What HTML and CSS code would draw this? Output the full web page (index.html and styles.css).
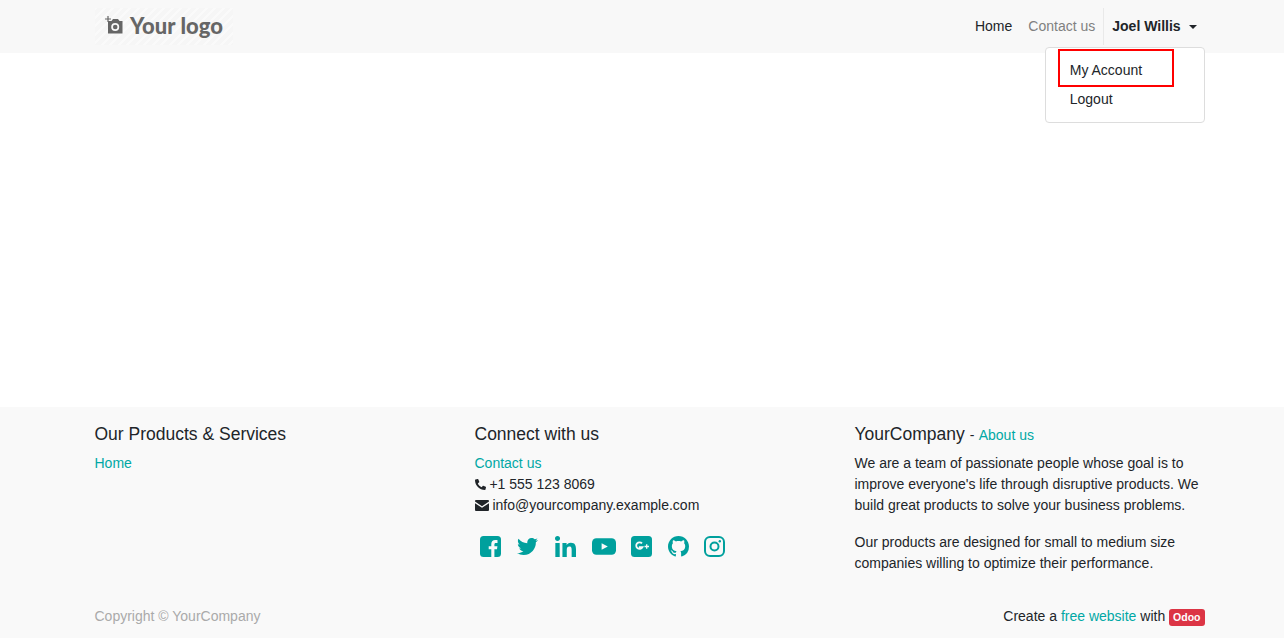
FILE: index.html
```html
<!DOCTYPE html>
<html lang="en">
<head>
    <meta charset="UTF-8">
    <meta name="viewport" content="width=device-width, initial-scale=1.0">
    <title>Your Company</title>
    <link rel="stylesheet" href="styles.css">
</head>
<body>
    <div class="nav-bar">
        <div class="container nav-inner">
            <a class="logo" href="#">
                <svg class="logo-icon" viewBox="0 0 18 18" width="18" height="18">
                    <path fill="#666" d="M3 5h3.500l1.500-2h5l1.500 2h3v12.500H3z"/>
                    <circle cx="10.200" cy="11" r="4" fill="#f8f8f8"/>
                    <circle cx="10.200" cy="11" r="2.300" fill="#666"/>
                    <path stroke="#666" stroke-width="1.200" d="M3 0v6M0 3h6"/>
                </svg>
                <span>Your logo</span>
            </a>
            <div class="nav-links">
                <a href="#">Home</a>
                <a href="#" class="muted">Contact us</a>
                <a href="#" class="user">Joel Willis <span class="caret"></span></a>
            </div>
        </div>
    </div>

    <div class="dropdown">
        <a href="#">My Account</a>
        <a href="#">Logout</a>
    </div>
    <div class="highlight"></div>

    <div class="page-body"></div>

    <div class="footer">
        <div class="container footer-cols">
            <div class="col">
                <h5>Our Products &amp; Services</h5>
                <a href="#">Home</a>
            </div>
            <div class="col">
                <h5>Connect with us</h5>
                <div><a href="#">Contact us</a></div>
                <div class="contact-row">
                    <svg class="phone" viewBox="0 0 512 512" width="11" height="11"><path fill="#212529" d="M19 24 123 0c11-3 23 3 28 14l48 112c4 10 1 21-7 28l-60 50c36 77 99 140 176 176l50-60c7-8 18-11 28-7l112 48c11 5 17 17 14 28l-24 104c-3 11-12 19-24 19C208 512 0 304 0 48c0-12 8-21 19-24z"/></svg>
                    +1 555 123 8069
                </div>
                <div class="contact-row">
                    <svg class="mail" viewBox="0 0 14 11" width="14" height="11"><path fill="#212529" d="M1 0h12a1 1 0 0 1 1 1v.6L7 6.200 0 1.600V1a1 1 0 0 1 1-1zM0 3.200l7 4.600 7-4.600V10a1 1 0 0 1-1 1H1a1 1 0 0 1-1-1z"/></svg>
                    info@yourcompany.example.com
                </div>
                <div class="social">
                    <a href="#"><svg viewBox="0 0 21 21" width="21" height="21"><rect width="21" height="21" rx="3.500" fill="#00a09d"/><path fill="#f9f9f9" d="M14.400 21v-7.800h2.600l.4-3h-3V8.400c0-.9.3-1.500 1.500-1.500h1.600V4.200c-.3 0-1.200-.1-2.300-.1-2.300 0-3.900 1.400-3.900 4v2.100H8.700v3h2.600V21z"/></svg></a>
                    <a href="#"><svg viewBox="0 0 512 512" width="21" height="21"><path fill="#00a09d" d="M459.37 151.716c.325 4.548.325 9.097.325 13.645 0 138.72-105.583 298.558-298.558 298.558-59.452 0-114.68-17.219-161.137-47.106 8.447.974 16.568 1.299 25.34 1.299 49.055 0 94.213-16.568 130.274-44.832-46.132-.975-84.792-31.188-98.112-72.772 6.498.974 12.995 1.624 19.818 1.624 9.421 0 18.843-1.3 27.614-3.573-48.081-9.747-84.143-51.98-84.143-102.985v-1.299c13.969 7.797 30.214 12.67 47.431 13.319-28.264-18.843-46.781-51.005-46.781-87.391 0-19.492 5.197-37.36 14.294-52.954 51.655 63.675 129.3 105.258 216.365 109.807-1.624-7.797-2.599-15.918-2.599-24.04 0-57.828 46.782-104.934 104.934-104.934 30.213 0 57.502 12.67 76.67 33.137 23.715-4.548 46.456-13.645 66.599-25.665-7.798 24.366-24.366 44.833-46.132 57.827 21.117-2.273 41.584-8.122 60.426-16.243-14.292 20.791-32.161 39.308-52.628 54.253z"/></svg></a>
                    <a href="#"><svg viewBox="0 0 448 448" width="21" height="21"><path fill="#00a09d" d="M100.280 448H7.400V148.900h92.880zM53.790 108.100C24.090 108.100 0 83.500 0 53.800a53.790 53.790 0 0 1 107.580 0c0 29.700-24.100 54.300-53.790 54.300zM447.900 448h-92.680V302.400c0-34.700-.7-79.200-48.290-79.200-48.290 0-55.690 37.700-55.690 76.700V448h-92.780V148.900h89.080v40.800h1.300c12.400-23.500 42.690-48.300 87.880-48.300 94 0 111.280 61.900 111.280 142.300V448z"/></svg></a>
                    <a href="#" class="shift-right"><svg viewBox="0 0 25 17" width="24" height="17"><rect width="25" height="17" rx="4.500" fill="#00a09d"/><path fill="#f9f9f9" d="M10 5l6.500 3.500L10 12z"/></svg></a>
                    <a href="#"><svg viewBox="0 0 21 21" width="21" height="21"><rect width="21" height="21" rx="3.500" fill="#00a09d"/><path fill="none" stroke="#f9f9f9" stroke-width="1.800" d="M11 7.400A3.300 3.300 0 1 0 11.400 11.200H7.900"/><path stroke="#f9f9f9" stroke-width="1.300" d="M13.500 10.500h4.500M15.700 8.300v4.400"/></svg></a>
                    <a href="#"><svg viewBox="0 0 16 16" width="21" height="21"><path fill="#00a09d" d="M8 0C3.580 0 0 3.580 0 8c0 3.540 2.290 6.530 5.470 7.590.4.070.55-.17.55-.38 0-.19-.01-.82-.01-1.490-2.010.37-2.530-.49-2.690-.94-.09-.23-.48-.94-.82-1.130-.28-.15-.68-.52-.01-.53.63-.01 1.080.58 1.230.82.72 1.210 1.870.87 2.330.66.07-.52.28-.87.51-1.070-1.780-.2-3.640-.89-3.640-3.950 0-.87.31-1.590.82-2.150-.08-.2-.36-1.020.08-2.120 0 0 .67-.21 2.200.82.64-.18 1.320-.27 2-.27.68 0 1.360.09 2 .27 1.530-1.040 2.200-.82 2.200-.82.44 1.100.16 1.920.08 2.120.51.56.82 1.270.82 2.150 0 3.070-1.870 3.750-3.650 3.950.29.25.54.73.54 1.480 0 1.070-.01 1.930-.01 2.200 0 .21.15.46.55.38A8.013 8.013 0 0 0 16 8c0-4.420-3.580-8-8-8z"/></svg></a>
                    <a href="#" class="shift-left"><svg viewBox="0 0 21 21" width="21" height="21"><rect x="1" y="1" width="19" height="19" rx="5" fill="none" stroke="#00a09d" stroke-width="2"/><circle cx="10.500" cy="10.500" r="4" fill="none" stroke="#00a09d" stroke-width="2"/><circle cx="15.800" cy="5.200" r="1.200" fill="#00a09d"/></svg></a>
                </div>
            </div>
            <div class="col">
                <h5 class="company-title">YourCompany <small>- <a href="#">About us</a></small></h5>
                <p>We are a team of passionate people whose goal is to improve everyone's life through disruptive products. We build great products to solve your business problems.</p>
                <p>Our products are designed for small to medium size companies willing to optimize their performance.</p>
            </div>
        </div>
        <div class="container copyright">
            <span class="copy-text">Copyright © YourCompany</span>
            <span>Create a <a href="#">free website</a> with <span class="badge">Odoo</span></span>
        </div>
    </div>
</body>
</html>
```

FILE: styles.css
```css
* {
    box-sizing: border-box;
}
html, body {
    height: 100%;
}
body {
    font-family: "Liberation Sans", Arial, sans-serif;
    font-size: 14px;
    line-height: 21px;
    color: #212529;
    background-color: #fff;
    margin: 0;
    display: flex;
    flex-direction: column;
    overflow: hidden;
}
a {
    color: #00a8a5;
    text-decoration: none;
}
.container {
    width: 1110px;
    margin-left: 94.5px;
}
.nav-bar {
    background-color: #f8f8f8;
    height: 53px;
    flex: none;
}
.nav-inner {
    display: flex;
    justify-content: space-between;
    align-items: flex-start;
}
.logo {
    width: 138px;
    height: 37px;
    margin-top: 8px;
    padding: 8px 0 0 10px;
    display: flex;
    gap: 7.5px;
    color: #666;
    font-family: Lato, sans-serif;
    font-size: 22px;
    font-weight: 900;
    line-height: 19px;
    letter-spacing: 0.05px;
    background: repeating-linear-gradient(135deg, #fafafa 0, #fafafa 2px, #f6f6f6 2px, #f6f6f6 6px);
}
.logo-icon {
    flex: none;
}
.nav-links {
    display: flex;
    height: 37px;
    margin-top: 8px;
}
.nav-links a {
    color: #212529;
    padding: 8px 8px;
}
.nav-links a.muted {
    color: #808080;
}
.nav-links a.user {
    font-weight: 700;
    border-left: 1px solid #e9e9e9;
}
.caret {
    display: inline-block;
    margin-left: 4px;
    vertical-align: 2px;
    border-top: 4.5px solid #212529;
    border-left: 4.5px solid transparent;
    border-right: 4.5px solid transparent;
}
.dropdown {
    position: absolute;
    top: 47px;
    left: 1045px;
    width: 160px;
    height: 76px;
    padding: 8px 0;
    background: #fff;
    border: 1px solid #ddd;
    border-radius: 4px;
}
.dropdown a {
    display: block;
    color: #212529;
    padding: 4px 23.75px;
}
.highlight {
    position: absolute;
    top: 49px;
    left: 1058px;
    width: 116px;
    height: 38px;
    border: 2px solid #f00;
}
.page-body {
    flex: 1;
}
.footer {
    background-color: #f9f9f9;
    height: 231px;
    flex: none;
    padding-top: 17px;
}
.footer-cols {
    display: grid;
    grid-template-columns: 380px 380px 350px;
    height: 182px;
}
h5 {
    font-size: 17.5px;
    font-weight: 400;
    line-height: 21px;
    margin: 0 0 8px;
}
h5 small {
    font-size: 14px;
}
.company-title {
    margin-bottom: 7px;
}
.company-title a {
    margin-left: 0.5px;
}
p {
    margin: 0 0 16px;
}
.contact-row svg {
    vertical-align: -1px;
}
.social {
    display: flex;
    align-items: center;
    margin-left: -3px;
    margin-top: 20px;
}
.social a {
    width: 37.5px;
    display: flex;
    justify-content: center;
}
.social a.shift-right {
    margin-left: 1px;
}
.social a.shift-left {
    margin-left: -2px;
}
.copyright {
    display: flex;
    justify-content: space-between;
}
.copy-text {
    color: #aaa;
}
.badge {
    display: inline-block;
    background-color: #dc3545;
    color: #fff;
    font-size: 10.5px;
    font-weight: 700;
    line-height: 10.5px;
    padding: 3px 4px;
    border-radius: 3px;
}
```
